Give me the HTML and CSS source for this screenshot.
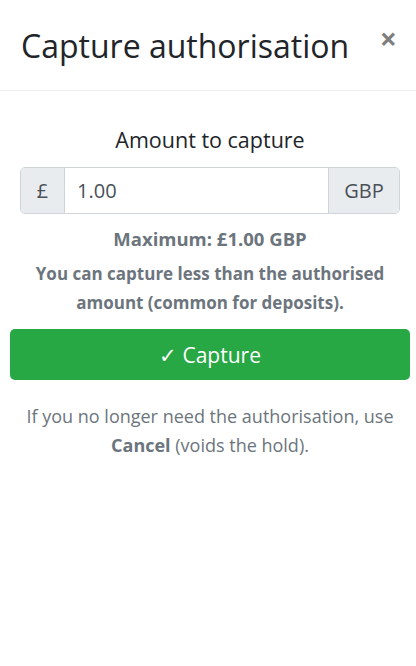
FILE: index.html
```html
<!DOCTYPE html>
<html>
<head>
<meta charset="utf-8">
<link rel="stylesheet" href="styles.css">
</head>
<body>
<div class="modal">
  <div class="modal-header">
    <h3 class="modal-title">Capture authorisation</h3>
    <button class="close" type="button">&times;</button>
  </div>
  <div class="modal-body">
    <label class="amount-label">Amount to capture</label>
    <div class="input-group">
      <span class="addon addon-left">£</span>
      <input class="amount-input" type="text" value="1.00">
      <span class="addon addon-right">GBP</span>
    </div>
    <p class="maximum">Maximum: £1.00 GBP</p>
    <p class="hint">You can capture less than the authorised amount (common for deposits).</p>
    <button class="btn-capture" type="button">✓ Capture</button>
    <p class="note">If you no longer need the authorisation, use <strong>Cancel</strong> (voids the hold).</p>
  </div>
</div>
</body>
</html>
```

FILE: styles.css
```css
* { box-sizing: border-box; }
html, body {
  margin: 0;
  background: #fff;
}
body {
  font-family: "Open Sans", "Noto Sans", sans-serif;
  color: #212529;
}
.modal {
  width: 416px;
}
.modal-header {
  height: 91px;
  display: flex;
  align-items: flex-start;
  justify-content: space-between;
  padding: 0 19px 0 21px;
  border-bottom: 1px solid #e9ecef;
}
.modal-title {
  margin: 27px 0 0;
  font-size: 32px;
  font-weight: 500;
  line-height: 1.2;
  color: #212529;
}
.close {
  margin-top: 24px;
  padding: 0;
  border: 0;
  background: transparent;
  font-family: "Open Sans", sans-serif;
  font-size: 30px;
  font-weight: 700;
  line-height: 1;
  color: #000;
  opacity: 0.5;
}
.modal-body {
  padding: 0 6px 0 10px;
  display: flex;
  flex-direction: column;
  align-items: stretch;
  text-align: center;
}
.amount-label {
  display: block;
  margin-top: 34px;
  font-size: 21.5px;
  line-height: 30px;
}
.input-group {
  display: flex;
  margin: 12px 10px 0;
  height: 47px;
  border: 1px solid #ced4da;
  border-radius: 5px;
  overflow: hidden;
}
.addon {
  display: flex;
  align-items: center;
  justify-content: center;
  background: #e9ecef;
  color: #495057;
  font-size: 20px;
}
.addon-left {
  width: 44px;
  border-right: 1px solid #ced4da;
}
.addon-right {
  width: 71px;
  border-left: 1px solid #ced4da;
}
.amount-input {
  flex: 1;
  min-width: 0;
  border: 0;
  padding: 0 12px;
  font-family: inherit;
  font-size: 20px;
  color: #495057;
  background: #fff;
}
.maximum {
  margin: 12px 0 0;
  font-size: 18.5px;
  font-weight: 700;
  line-height: 26px;
  color: #6c757d;
}
.hint {
  margin: 7px 0 0;
  font-size: 17px;
  font-weight: 700;
  line-height: 29px;
  color: #6c757d;
}
.btn-capture {
  margin-top: 12px;
  height: 51px;
  border: 0;
  border-radius: 5px;
  background: #28a745;
  color: #fff;
  font-family: inherit;
  font-size: 21px;
}
.note {
  margin: 22px 0 0;
  font-size: 18px;
  line-height: 29px;
  color: #6c757d;
  padding: 0 8px;
}
.note strong {
  color: #6c757d;
}
```
